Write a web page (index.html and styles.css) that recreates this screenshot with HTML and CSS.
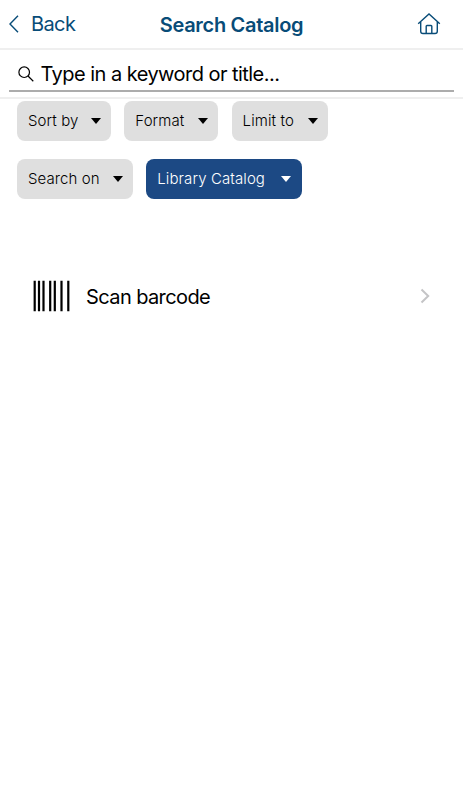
FILE: index.html
```html
<!DOCTYPE html>
<html lang="en">
<head>
    <meta charset="utf-8">
    <title>Search Catalog</title>
    <link rel="stylesheet" href="styles.css">
</head>
<body>
    <header class="navbar">
        <a class="back">
            <svg width="10" height="18" viewBox="0 0 10 18"><path d="M9 .8L1 9l8 8.2"/></svg>
            <span class="back-label">Back</span>
        </a>
        <h1 class="title">Search Catalog</h1>
        <a class="home">
            <svg width="24" height="22" viewBox="0 0 24 22"><path d="M1.2 10.8L12 1l10.8 9.8M3.7 9v9.2q0 2.3 2.3 2.3h12q2.3 0 2.3-2.3V9M9.2 20.5v-7.2q0-.8.8-.8h4q.8 0 .8.8v7.2"/></svg>
        </a>
    </header>

    <div class="search">
        <div class="search-field">
            <svg class="search-icon" width="16" height="16" viewBox="0 0 16 16"><circle cx="6.2" cy="6.2" r="5.3"/><path d="M10 10l5.3 5.2"/></svg>
            <span class="placeholder">Type in a keyword or title...</span>
        </div>
    </div>

    <div class="filters">
        <button class="filter sort"><span>Sort by</span><i class="caret"></i></button>
        <button class="filter format"><span>Format</span><i class="caret"></i></button>
        <button class="filter limit"><span>Limit to</span><i class="caret"></i></button>
        <button class="filter search-on"><span>Search on</span><i class="caret"></i></button>
        <button class="filter catalog active"><span>Library Catalog</span><i class="caret"></i></button>
    </div>

    <div class="scan">
        <svg class="barcode" width="37" height="32" viewBox="0 0 37 32"><path d="M1.7 .8v30.4M6 .8v30.4M10.5 .8v30.4M17.2 .8v30.4M21.8 .8v30.4M28.5 .8v30.4M35.3 .8v30.4"/></svg>
        <span class="scan-label">Scan barcode</span>
        <svg class="chevron" width="10" height="16" viewBox="0 0 10 16"><path d="M1.5 1.5L8.2 8l-6.7 6.5"/></svg>
    </div>
</body>
</html>
```

FILE: styles.css
```css
body {
    margin: 0;
    background-color: #fff;
    color: #000;
    font-family: Inter, "Liberation Sans", sans-serif;
}

svg {
    display: block;
    fill: none;
    stroke: currentColor;
}

.navbar {
    display: grid;
    grid-template-columns: 1fr auto 1fr;
    align-items: center;
    height: 48px;
    padding: 0 9px;
    border-bottom: 2px solid #efefef;
    color: #084c78;
}

.back {
    display: flex;
    align-items: center;
    gap: 12px;
    font-size: 20px;
    letter-spacing: -0.6px;
}

.back svg, .home svg {
    stroke-width: 1.4;
}

.title {
    margin: 0;
    padding-top: 2px;
    font-size: 20px;
    font-weight: 600;
    letter-spacing: -0.3px;
}

.home {
    justify-self: end;
    margin-right: 13px;
}

.search {
    height: 47px;
    padding: 0 9px;
    border-bottom: 2px solid #efefef;
}

.search-field {
    display: flex;
    align-items: center;
    box-sizing: border-box;
    height: 42px;
    padding: 8px 0 0 8.5px;
    border-bottom: 2px solid #acacac;
}

.search-icon {
    margin-right: 7px;
    stroke-width: 1.2;
}

.placeholder {
    font-size: 20px;
    letter-spacing: -0.54px;
}

.filters {
    display: flex;
    flex-wrap: wrap;
    gap: 18px 13.3px;
    width: 330px;
    padding: 1.5px 17px 0;
}

.filter {
    display: flex;
    justify-content: space-between;
    align-items: center;
    box-sizing: border-box;
    height: 40px;
    padding: 0 10px 0 11px;
    border: 0;
    border-radius: 8px;
    background-color: #dfdfdf;
    color: #000;
    font-family: inherit;
    font-size: 15px;
    font-weight: 350;
    letter-spacing: 0.1px;
}

.sort, .format {
    width: 94px;
}

.limit {
    width: 96px;
}

.search-on {
    width: 116px;
}

.catalog {
    width: 155.5px;
    padding-right: 11px;
}

.active {
    background-color: #1c4984;
    color: #fff;
}

.caret {
    margin-top: 1px;
    border: 5.5px solid transparent;
    border-top: 6px solid currentColor;
    border-bottom: 0;
}

.scan {
    display: flex;
    align-items: center;
    height: 60px;
    margin-top: 67.5px;
    padding: 0 33px;
}

.barcode {
    margin-right: 16px;
    stroke-width: 2.2;
}

.scan-label {
    padding-top: 2px;
    font-size: 20px;
    letter-spacing: -0.6px;
}

.chevron {
    margin-left: auto;
    color: #c4c4c6;
    stroke-width: 2;
}
```
